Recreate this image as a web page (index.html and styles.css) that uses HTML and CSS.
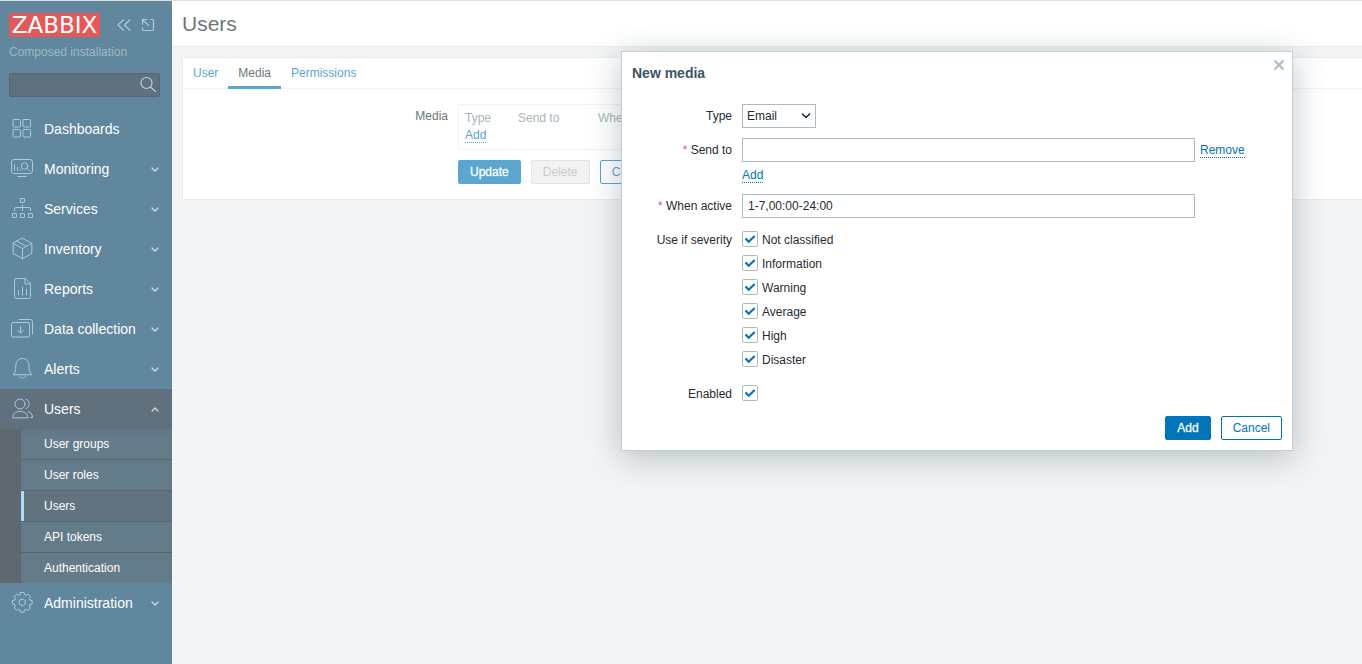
FILE: index.html
```html
<!DOCTYPE html>
<html lang="en">
<head>
<meta charset="utf-8">
<title>Users</title>
<link rel="stylesheet" href="styles.css">
</head>
<body>
<div class="layout">
  <aside class="sidebar">
    <div class="brand">
      <a class="logo" href="#">ZABBIX</a>
      <button class="icon-button" type="button" aria-label="Collapse sidebar">
        <svg class="brand-icon" viewBox="0 0 16 16"><path d="M7.500 2.800 2 8l5.500 5.200M14 2.800 8.500 8l5.500 5.200"/></svg>
      </button>
      <button class="icon-button" type="button" aria-label="Hide sidebar">
        <svg class="brand-icon" viewBox="0 0 16 16"><path d="M10.500 2.500h2a1 1 0 0 1 1 1v9a1 1 0 0 1-1 1h-9a1 1 0 0 1-1-1v-2M2.500 7V2.500H7M2.500 2.500l6 6"/></svg>
      </button>
    </div>
    <div class="server-name">Composed installation</div>
    <form class="search" role="search">
      <input class="search-input" type="text" aria-label="Search">
      <button class="icon-button search-button" type="button" aria-label="Run search">
        <svg class="search-icon" viewBox="0 0 18 18"><circle cx="7.500" cy="7" r="5.500"/><path d="m11.500 11 5 4.500"/></svg>
      </button>
    </form>
    <nav class="menu">
      <a class="menu-item" href="#">
        <svg class="menu-icon" viewBox="0 0 24 24"><rect x="3" y="2.500" width="7.500" height="7.500" rx="1"/><rect x="13" y="2.500" width="7.500" height="7.500" rx="1"/><rect x="3" y="12.500" width="7.500" height="7.500" rx="1"/><rect x="13" y="12.500" width="7.500" height="7.500" rx="1"/></svg>
        <span class="menu-text">Dashboards</span>
      </a>
      <a class="menu-item" href="#">
        <svg class="menu-icon" viewBox="0 0 24 24"><rect x="1.500" y="2.500" width="21" height="14" rx="2.500"/><path d="M8 19.500h8M4.500 7.500v6M7.500 10.500v3M10.500 12.500v1M17 11.500l2.500 2.500"/><circle cx="14.500" cy="9" r="3.300"/></svg>
        <span class="menu-text">Monitoring</span>
        <svg class="caret" viewBox="0 0 8 8"><path d="m1 3 3 3 3-3"/></svg>
      </a>
      <a class="menu-item" href="#">
        <svg class="menu-icon" viewBox="0 0 24 24"><rect x="10.500" y="1.500" width="4" height="4" rx=".5"/><rect x="2.500" y="16.500" width="4" height="4" rx=".5"/><rect x="10.500" y="16.500" width="4" height="4" rx=".5"/><rect x="18.500" y="16.500" width="4" height="4" rx=".5"/><path d="M12.500 8v5.500M4.500 13.500v-1.500a1.500 1.500 0 0 1 1.500-1.500h13a1.500 1.500 0 0 1 1.500 1.500v1.500"/></svg>
        <span class="menu-text">Services</span>
        <svg class="caret" viewBox="0 0 8 8"><path d="m1 3 3 3 3-3"/></svg>
      </a>
      <a class="menu-item" href="#">
        <svg class="menu-icon" viewBox="0 0 24 24"><path d="m12.500 1.300 9.300 5v10.200l-9.300 5.200-9.300-5.200V6.300zM3.200 6.300l9.300 5.200 9.300-5.200M12.500 11.500v10.200M6.800 4.200l9.800 5.200"/></svg>
        <span class="menu-text">Inventory</span>
        <svg class="caret" viewBox="0 0 8 8"><path d="m1 3 3 3 3-3"/></svg>
      </a>
      <a class="menu-item" href="#">
        <svg class="menu-icon" viewBox="0 0 24 24"><path d="M15 1.500H6.500a2 2 0 0 0-2 2v16a2 2 0 0 0 2 2h12a2 2 0 0 0 2-2V7zM15 1.500V7h5.500M8.500 13.500v4.500M12.500 10v8M16.500 12.500v5.500"/></svg>
        <span class="menu-text">Reports</span>
        <svg class="caret" viewBox="0 0 8 8"><path d="m1 3 3 3 3-3"/></svg>
      </a>
      <a class="menu-item" href="#">
        <svg class="menu-icon" viewBox="0 0 24 24"><rect x="1.500" y="5.500" width="18" height="14.500" rx="1.500"/><path d="M9 2.500h11.500a2 2 0 0 1 2 2V17M10.500 9.500v6.500M7.500 13l3 3 3-3"/></svg>
        <span class="menu-text">Data collection</span>
        <svg class="caret" viewBox="0 0 8 8"><path d="m1 3 3 3 3-3"/></svg>
      </a>
      <a class="menu-item" href="#">
        <svg class="menu-icon" viewBox="0 0 24 24"><path d="M3.300 17.500c2-2 2.500-4 2.500-9.500a6.600 6.600 0 0 1 13.200 0c0 5.500.5 7.500 2.500 9.500zM9.300 19.500c1 2 5.200 2 6.200 0"/></svg>
        <span class="menu-text">Alerts</span>
        <svg class="caret" viewBox="0 0 8 8"><path d="m1 3 3 3 3-3"/></svg>
      </a>
      <a class="menu-item menu-item-open" href="#" aria-expanded="true">
        <svg class="menu-icon" viewBox="0 0 24 24"><circle cx="10" cy="7" r="5"/><path d="M2.500 20.500c0-3.500 3-6 7.700-6s7.700 2.500 7.700 6zM16 2.300c4 .8 4.700 7.500 0 9.400M18.500 14.700c2.500.8 4 2.800 4 5.800h-2"/></svg>
        <span class="menu-text">Users</span>
        <svg class="caret" viewBox="0 0 8 8"><path d="m1 6 3-3 3 3"/></svg>
      </a>
      <div class="submenu">
        <a class="submenu-item" href="#">User groups</a>
        <a class="submenu-item" href="#">User roles</a>
        <a class="submenu-item submenu-item-current" href="#" aria-current="page">Users</a>
        <a class="submenu-item" href="#">API tokens</a>
        <a class="submenu-item" href="#">Authentication</a>
      </div>
      <a class="menu-item" href="#">
        <svg class="menu-icon" viewBox="0 0 24 24"><g transform="translate(12.300 11.300)"><path d="M-1.700-9.900h3.400l.6 2.400 1.400.6 2-1.300 2.500 2.500-1.300 2 .6 1.400 2.400.6v3.400l-2.400.6-.6 1.400 1.300 2-2.500 2.500-2-1.300-1.400.6-.6 2.400h-3.400l-.6-2.400-1.400-.6-2 1.300-2.500-2.500 1.300-2-.6-1.400-2.400-.6v-3.400l2.400-.6.6-1.400-1.300-2 2.500-2.500 2 1.300 1.400-.6z"/><circle r="3.300"/></g></svg>
        <span class="menu-text">Administration</span>
        <svg class="caret" viewBox="0 0 8 8"><path d="m1 3 3 3 3-3"/></svg>
      </a>
    </nav>
  </aside>

  <main class="content">
    <header class="page-header"><h1 class="page-title">Users</h1></header>
    <section class="card">
      <nav class="tabs">
        <a class="tab" href="#">User</a>
        <a class="tab tab-current" href="#">Media</a>
        <a class="tab" href="#">Permissions</a>
      </nav>
      <div class="user-form">
        <span class="user-label" id="media-label">Media</span>
        <div class="media-box">
          <table class="media-table" aria-labelledby="media-label">
            <thead><tr><th class="col-type">Type</th><th class="col-send">Send to</th><th>When active</th></tr></thead>
            <tbody><tr><td colspan="3"><a class="link link-muted" href="#">Add</a></td></tr></tbody>
          </table>
        </div>
        <div class="user-actions">
          <button class="button button-update" type="button">Update</button>
          <button class="button button-delete" type="button" disabled>Delete</button>
          <button class="button button-back" type="button">Cancel</button>
        </div>
      </div>
    </section>
  </main>
</div>

<div class="dialog" role="dialog" aria-labelledby="dialog-title">
  <h2 class="dialog-title" id="dialog-title">New media</h2>
  <button class="icon-button dialog-close" type="button" aria-label="Close">
    <svg class="close-icon" viewBox="0 0 12 12"><path d="m1.500 1.500 9 9M10.500 1.500l-9 9"/></svg>
  </button>
  <form class="dialog-form">
    <label class="label" for="type">Type</label>
    <div class="select-wrap">
      <select class="select" id="type"><option>Email</option></select>
      <svg class="select-arrow" viewBox="0 0 10 8"><path d="m1.500 2 3.500 3.500L8.500 2"/></svg>
    </div>

    <label class="label" for="send-to"><span class="required">*</span> Send to</label>
    <div class="send-to">
      <div class="send-row">
        <input class="text-input" id="send-to" type="text">
        <a class="link" href="#">Remove</a>
      </div>
      <div class="send-add"><a class="link" href="#">Add</a></div>
    </div>

    <label class="label" for="when-active"><span class="required">*</span> When active</label>
    <input class="text-input" id="when-active" type="text" value="1-7,00:00-24:00">

    <span class="label" id="severity-label">Use if severity</span>
    <div class="severity" role="group" aria-labelledby="severity-label">
      <label class="check"><input class="checkbox" type="checkbox" checked>Not classified</label>
      <label class="check"><input class="checkbox" type="checkbox" checked>Information</label>
      <label class="check"><input class="checkbox" type="checkbox" checked>Warning</label>
      <label class="check"><input class="checkbox" type="checkbox" checked>Average</label>
      <label class="check"><input class="checkbox" type="checkbox" checked>High</label>
      <label class="check"><input class="checkbox" type="checkbox" checked>Disaster</label>
    </div>

    <label class="label" for="enabled">Enabled</label>
    <div class="check"><input class="checkbox" id="enabled" type="checkbox" checked></div>
  </form>
  <div class="dialog-actions">
    <button class="button button-add" type="button">Add</button>
    <button class="button button-cancel" type="button">Cancel</button>
  </div>
</div>
</body>
</html>
```
FILE: styles.css
```css
* { box-sizing: border-box; }

body {
  margin: 0;
  background: #f2f4f5;
  color: #1f2c33;
  font: 12px/16px "Liberation Sans", Arial, sans-serif;
}

a { color: inherit; text-decoration: none; }
svg { display: block; fill: none; stroke: currentColor; stroke-linecap: round; stroke-linejoin: round; }
input, select, button { font: inherit; color: inherit; }

.icon-button { display: flex; padding: 0; border: 0; background: none; cursor: pointer; }

.layout {
  display: grid;
  grid-template-columns: 172px 1fr;
  min-height: 100vh;
  border-top: 1px solid #dfe0e0;
}

/* Sidebar */
.sidebar { background: #60879e; color: #fff; }
.brand { display: flex; align-items: center; gap: 8px; padding: 12px 16px 0 9px; color: #a9cbe0; }
.logo {
  width: 91px;
  margin-right: 8px;
  background: #e35959;
  color: #fff;
  font: 23px/24px "DejaVu Sans", Verdana, sans-serif;
  text-align: center;
}
.brand-icon { width: 16px; height: 16px; stroke-width: 1.2; }
.server-name { padding: 7px 9px 0; color: #9fb8c5; }
.search { display: flex; align-items: center; margin: 13px 12px 12px 9px; border: 1px solid #59666e; border-radius: 2px; background: #60717d; }
.search-input { flex: 1; min-width: 0; height: 22px; padding: 0 5px; border: 0; background: none; outline: 0; }
.search-button { padding-right: 2px; color: #b5d3e5; }
.search-icon { width: 18px; height: 18px; stroke-width: 1.2; }

.menu-item { display: flex; align-items: center; height: 40px; padding: 0 13px 0 10px; font-size: 14px; }
.menu-item-open { background: #60717d; }
.menu-icon { width: 24px; height: 24px; color: #a9cbe0; }
.menu-text { flex: 1; padding-left: 10px; }
.caret { width: 8px; height: 8px; color: #cfdde5; stroke-width: 1.2; }

.submenu { border-left: 21px solid #5e696f; background: #647b89; box-shadow: inset 0 6px 6px -5px #60717d; }
.submenu-item { display: block; padding-left: 23px; line-height: 30px; }
.submenu-item + .submenu-item { border-top: 1px solid #596870; }
.submenu-item-current { background: #60737f; box-shadow: inset 3px 0 #acdcfc; }

/* Page */
.content { min-width: 0; }
.page-header { padding: 10px; border-bottom: 1px solid #e9ecee; background: #fff; }
.page-title { margin: 0; color: #6d767a; font-size: 21px; font-weight: 400; line-height: 25px; }
.card { margin: 10px 0 0 10px; border: 1px solid #e9ecee; border-right: 0; background: #fff; }
.tabs { display: flex; box-shadow: inset 0 -1px #f1f3f5; }
.tab { padding: 7px 10px 5px; border-bottom: 3px solid transparent; color: #5ba5d1; }
.tab-current { border-color: #5ba5d1; color: #6d767a; }

.user-form { display: grid; grid-template-columns: 265px 1fr; gap: 10px; padding: 15px 0 15px; }
.user-label { padding-top: 4px; color: #6d767a; text-align: right; }
.media-box { justify-self: start; width: 690px; max-width: 100%; padding: 4px 6px 6px; border: 1px solid #f0f2f4; }
.media-table { border-collapse: collapse; color: #a6b5bc; }
.media-table th { padding: 0; font-weight: 400; text-align: left; line-height: 18px; }
.media-table td { padding: 0; }
.media-table .col-type { width: 53px; }
.media-table .col-send { width: 80px; }
.user-actions { grid-column: 2; display: flex; gap: 10px; }

.link { border-bottom: 1px dotted #0275b8; color: #0275b8; }
.link-muted { border-color: #5ba5d1; color: #5ba5d1; }

.button { height: 24px; padding: 0 11px; border: 1px solid #0275b8; border-radius: 2px; background: #fff; color: #0275b8; line-height: 22px; cursor: pointer; }
.button-update { border-color: #5ba5d1; background: #5ba5d1; color: #fff; -webkit-text-stroke: 0.3px; }
.button-delete { min-width: 59px; border-color: #e0e4e6; background: #f2f2f2; color: #c8cdd0; }
.button-back { border-color: #5ba5d1; color: #5ba5d1; }
.button-add { background: #0275b8; color: #fff; -webkit-text-stroke: 0.3px; }

/* Dialog */
.dialog {
  position: absolute;
  top: 51px;
  right: 69px;
  width: 672px;
  padding: 12px 10px 10px;
  border: 1px solid #c5ced4;
  background: #fff;
  box-shadow: 0 6px 30px rgba(35, 65, 85, .3);
}
.dialog-title { margin: 0 0 22px; color: #3c5563; font-size: 14px; line-height: 18px; }
.dialog-close { position: absolute; top: 7px; right: 7px; color: #acbbc2; }
.close-icon { width: 12px; height: 12px; stroke-width: 2; stroke-linecap: butt; }
.dialog-form { display: grid; grid-template-columns: 100px 453px; gap: 10px; }
.label { line-height: 24px; text-align: right; }
.required { color: #e45959; }

.select-wrap { display: grid; justify-self: start; }
.select { grid-area: 1 / 1; width: 74px; height: 24px; padding: 0 4px; border: 1px solid #acbbc2; border-radius: 0; background: #fff; appearance: none; }
.select-arrow { grid-area: 1 / 1; place-self: center end; width: 10px; height: 8px; margin-right: 5px; stroke-width: 1.6; pointer-events: none; }
.text-input { flex: none; width: 453px; height: 24px; padding: 0 5px; border: 1px solid #acbbc2; background: #fff; outline: 0; }
.send-row { display: flex; align-items: center; gap: 5px; }
.send-row .link, .send-add .link { line-height: 14px; }
.send-add { padding-top: 5px; line-height: 17px; }

.check { display: flex; gap: 4px; align-items: center; height: 24px; width: max-content; }
.checkbox {
  width: 16px;
  height: 16px;
  margin: 0 0 2px;
  border: 1px solid #acbbc2;
  border-radius: 2px;
  appearance: none;
  background: #fff;
}
.checkbox:checked {
  background: #fff url("data:image/svg+xml,%3Csvg xmlns='http://www.w3.org/2000/svg' viewBox='0 0 14 14'%3E%3Cpath d='M2.500 6.500l3.200 3.300 6-5.800' fill='none' stroke='%230275b8' stroke-width='2.200'/%3E%3C/svg%3E") center / 14px no-repeat;
}
.dialog-actions { display: flex; justify-content: flex-end; gap: 10px; margin-top: 10px; }
```
